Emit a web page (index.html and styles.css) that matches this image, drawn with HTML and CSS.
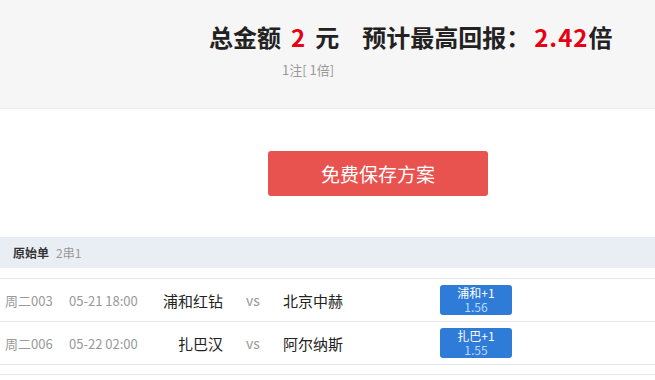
FILE: index.html
```html
<!DOCTYPE html>
<html lang="zh-CN">

<head>
  <meta charset="UTF-8">
  <meta name="viewport" content="width=device-width, initial-scale=1.0">
  <title>方案详情</title>
  <link rel="stylesheet" href="styles.css">
</head>

<body>
  <div class="summary">
    <div class="total">
      总金额<em class="amount">2</em>元<span class="gap"></span>预计最高回报：<em class="return">2.42</em>倍
    </div>
    <div class="bets">1注[ 1倍]</div>
  </div>

  <div class="action">
    <button class="btn-save">免费保存方案</button>
  </div>

  <div class="section-head">
    <b>原始单</b><span class="pass">2串1</span>
  </div>

  <div class="match-list">
    <div class="match">
      <div class="no">周二003</div>
      <div class="time">05-21 18:00</div>
      <div class="home">浦和红钻</div>
      <div class="vs">vs</div>
      <div class="away">北京中赫</div>
      <div class="odds">
        <span class="pick">浦和+1</span>
        <span class="rate">1.56</span>
      </div>
    </div>
    <div class="match">
      <div class="no">周二006</div>
      <div class="time">05-22 02:00</div>
      <div class="home">扎巴汉</div>
      <div class="vs">vs</div>
      <div class="away">阿尔纳斯</div>
      <div class="odds">
        <span class="pick">扎巴+1</span>
        <span class="rate">1.55</span>
      </div>
    </div>
  </div>
  <div class="list-end"></div>
</body>

</html>
```

FILE: styles.css
```css
* {
  margin: 0;
  padding: 0;
  box-sizing: border-box;
}

body {
  font-family: "Noto Sans CJK SC", "Liberation Sans", sans-serif;
  color: #333;
  background: #fff;
}

.summary {
  height: 109px;
  padding: 20px 0 0 209px;
  background: #f6f6f6;
  border-bottom: 1px solid #efefef;
}

.total {
  font-size: 24px;
  font-weight: bold;
  line-height: 34px;
  color: #222;
  white-space: nowrap;
}

.total em {
  font-style: normal;
  color: #e60012;
}

.amount {
  margin: 0 10px;
}

.return {
  margin-left: 4px;
  letter-spacing: 1px;
}

.gap {
  display: inline-block;
  width: 23px;
}

.bets {
  margin: 6px 0 0 73px;
  font-size: 13px;
  line-height: 20px;
  color: #999;
}

.action {
  height: 128px;
  padding: 42px 0 0 268px;
}

.btn-save {
  width: 220px;
  height: 45px;
  border: none;
  border-radius: 3px;
  background: #e8524f;
  color: #fff;
  font-family: inherit;
  font-size: 19px;
}

.section-head {
  height: 31px;
  padding-left: 13px;
  line-height: 31px;
  font-size: 12px;
  background: #e9eef4;
}

.section-head b {
  color: #333;
}

.pass {
  margin-left: 7px;
  color: #999;
}

.match-list {
  margin-top: 10px;
  border-top: 1px solid #e6e6e6;
}

.match {
  display: flex;
  align-items: center;
  height: 43px;
  border-bottom: 1px solid #e6e6e6;
  font-size: 13px;
  color: #999;
}

.no {
  width: 69px;
  padding-left: 5px;
}

.time {
  width: 86px;
}

.home {
  width: 68px;
  text-align: right;
  font-size: 15px;
  color: #222;
}

.vs {
  width: 60px;
  text-align: center;
  font-size: 14px;
}

.away {
  width: 157px;
  font-size: 15px;
  color: #222;
}

.odds {
  display: flex;
  flex-direction: column;
  align-items: center;
  justify-content: center;
  width: 72px;
  height: 30px;
  border-radius: 3px;
  background: #2f7bd8;
  font-size: 12px;
  line-height: 14px;
}

.pick {
  color: #fff;
}

.rate {
  color: #b9d9ff;
}

.list-end {
  margin-top: 9px;
  border-top: 1px solid #e6e6e6;
}
```
